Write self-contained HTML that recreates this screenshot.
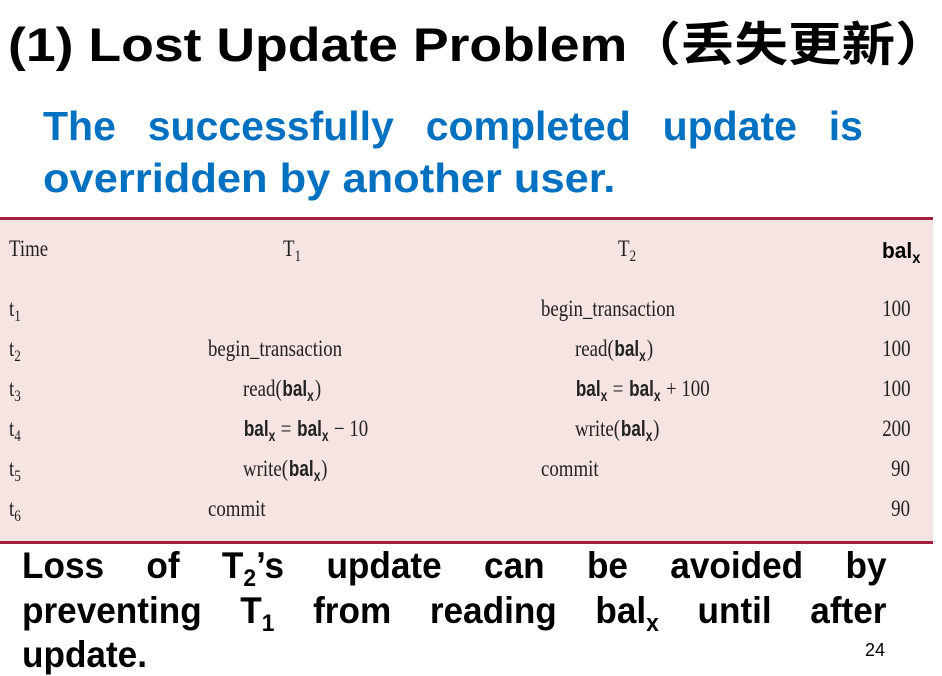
<!DOCTYPE html>
<html><head><meta charset="utf-8"><style>
body{margin:0;width:942px;height:676px;background:#fff;position:relative;overflow:hidden}
.t{position:absolute;white-space:nowrap}
h1{position:absolute;left:8px;top:6px;margin:0;font:bold 47px "Liberation Sans","Noto Sans CJK SC",sans-serif;color:#000;white-space:nowrap;transform:scaleX(1.14);transform-origin:left top}
.bl{position:absolute;left:43px;width:820px;font:bold 41px "Liberation Sans",sans-serif;color:#0070c0;white-space:nowrap}
.j{text-align:justify;text-align-last:justify}
.tbl{position:absolute;left:0;top:217px;width:933px;height:321px;background:#f5e4e1;border-top:3px solid #a3213c;border-bottom:3px solid #a3213c}
.s{font-family:"Liberation Serif",serif;font-size:23px;color:#222;transform:scaleX(.82);transform-origin:left top}
.s.r{transform-origin:right top}
.b{font-family:"Liberation Sans",sans-serif;font-weight:bold;font-size:22px;display:inline-block;transform:scaleX(.95)}
sub{font-size:.7em;vertical-align:-5px}
.ft{position:absolute;left:22px;width:910px;font:bold 37px "Liberation Sans",sans-serif;color:#000;white-space:nowrap;transform:scaleX(.95);transform-origin:left top}
.ft sub{font-size:.65em;vertical-align:-8px}
</style></head><body>
<h1>(1) Lost Update Problem（丢失更新）</h1>
<div class="bl j" style="top:103px">The successfully completed update is</div>
<div class="bl" style="top:155px;transform:scaleX(1.06);transform-origin:left top">overridden by another user.</div>
<div class="tbl"></div>
<div class="t s" style="left:9px;top:236px">Time</div>
<div class="t s" style="left:283px;top:236px">T<sub>1</sub></div>
<div class="t s" style="left:618px;top:236px">T<sub>2</sub></div>
<div class="t" style="left:881px;top:238px"><span class="b">bal<sub>x</sub></span></div>

<div class="t s" style="left:9px;top:296px">t<sub>1</sub></div>
<div class="t s" style="left:9px;top:336px">t<sub>2</sub></div>
<div class="t s" style="left:9px;top:376px">t<sub>3</sub></div>
<div class="t s" style="left:9px;top:416px">t<sub>4</sub></div>
<div class="t s" style="left:9px;top:456px">t<sub>5</sub></div>
<div class="t s" style="left:9px;top:496px">t<sub>6</sub></div>

<div class="t s" style="left:208px;top:336px">begin_transaction</div>
<div class="t s" style="left:243px;top:376px">read(<span class="b">bal<sub>x</sub></span>)</div>
<div class="t s" style="left:243px;top:416px"><span class="b">bal<sub>x</sub></span> = <span class="b">bal<sub>x</sub></span> − 10</div>
<div class="t s" style="left:243px;top:456px">write(<span class="b">bal<sub>x</sub></span>)</div>
<div class="t s" style="left:208px;top:496px">commit</div>

<div class="t s" style="left:541px;top:296px">begin_transaction</div>
<div class="t s" style="left:575px;top:336px">read(<span class="b">bal<sub>x</sub></span>)</div>
<div class="t s" style="left:575px;top:376px"><span class="b">bal<sub>x</sub></span> = <span class="b">bal<sub>x</sub></span> + 100</div>
<div class="t s" style="left:575px;top:416px">write(<span class="b">bal<sub>x</sub></span>)</div>
<div class="t s" style="left:541px;top:456px">commit</div>

<div class="t s r" style="right:32px;top:296px">100</div>
<div class="t s r" style="right:32px;top:336px">100</div>
<div class="t s r" style="right:32px;top:376px">100</div>
<div class="t s r" style="right:32px;top:416px">200</div>
<div class="t s r" style="right:32px;top:456px">90</div>
<div class="t s r" style="right:32px;top:496px">90</div>

<div class="ft j" style="top:545px">Loss of T<sub>2</sub>’s update can be avoided by</div>
<div class="ft j" style="top:590px">preventing T<sub>1</sub> from reading bal<sub>x</sub> until after</div>
<div class="ft" style="top:634px">update.</div>
<div class="t" style="left:865px;top:640px;font:18px 'Liberation Sans',sans-serif">24</div>
</body></html>
